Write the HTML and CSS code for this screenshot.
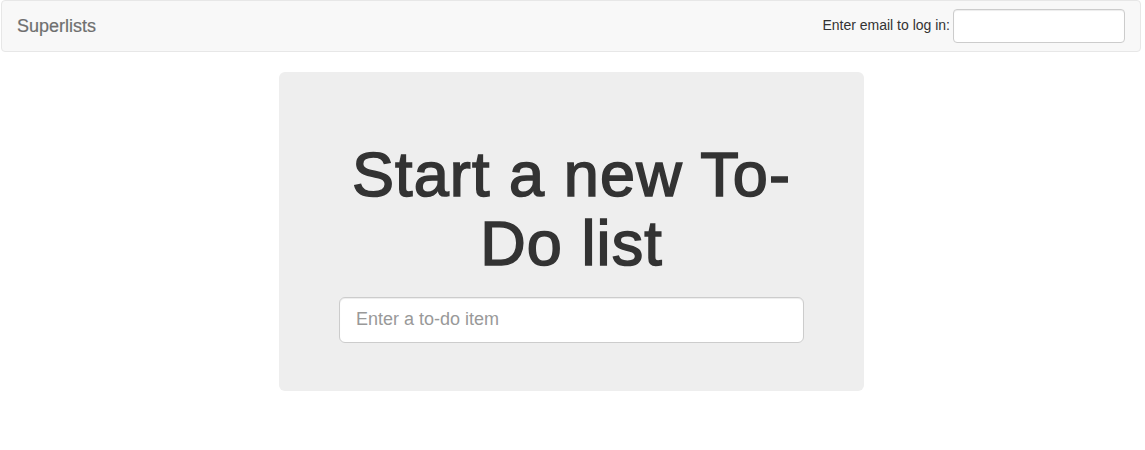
FILE: index.html
```html
<!DOCTYPE html>
<html>
<head>
<meta charset="utf-8">
<title>To-Do lists</title>
<link rel="stylesheet" href="styles.css">
</head>
<body>
<nav class="navbar">
  <a class="brand" href="#">Superlists</a>
  <form class="login">
    <label class="login-label" for="email">Enter email to log in:</label>
    <input class="login-input" id="email" type="text">
  </form>
</nav>
<main class="jumbotron">
  <h1 class="title">Start a new To-Do list</h1>
  <form>
    <input class="item-input" type="text" placeholder="Enter a to-do item">
  </form>
</main>
</body>
</html>
```
FILE: styles.css
```css
* { box-sizing: border-box; }
body {
  margin: 0;
  background: #fff;
  font-family: "Liberation Sans", Arial, sans-serif;
  font-size: 14px;
  line-height: 1.42857;
  color: #333;
}
.navbar {
  width: 1140px;
  margin: 0 0 20px 1px;
  min-height: 52px;
  background: #f8f8f8;
  border: 1px solid #e7e7e7;
  border-radius: 4px;
  display: flex;
  justify-content: space-between;
  align-items: flex-start;
}
.brand {
  padding: 15px 15px;
  font-size: 18px;
  line-height: 20px;
  color: #6f6f6f;
  text-decoration: none;
  -webkit-text-stroke: 0.2px #6f6f6f;
}
.login {
  display: flex;
  align-items: center;
  margin: 8px 15px 0 0;
}
.login-label {
  font-size: 14px;
  color: #333;
  margin-right: 3px;
}
.login-input {
  width: 172px;
  height: 34px;
  border: 1px solid #ccc;
  border-radius: 4px;
  background: #fff;
  box-shadow: inset 0 1px 1px rgba(0,0,0,.075);
  padding: 6px 12px;
  font: inherit;
}
.jumbotron {
  display: block;
  width: 585px;
  margin-left: 279px;
  padding: 48px 60px;
  background: #eee;
  border-radius: 6px;
}
.title {
  margin: 20px 0 18px;
  font-size: 63px;
  font-weight: 500;
  line-height: 1.1;
  letter-spacing: 1.1px;
  text-align: center;
  color: #333;
  -webkit-text-stroke: 1.6px #333;
}
.item-input {
  display: block;
  width: 100%;
  height: 46px;
  padding: 10px 16px;
  font-family: inherit;
  font-size: 18px;
  line-height: 1.33;
  color: #555;
  background: #fff;
  border: 1px solid #ccc;
  border-radius: 6px;
  box-shadow: inset 0 1px 1px rgba(0,0,0,.075);
}
.item-input::placeholder { color: #999; }
form { margin: 0; }
```
